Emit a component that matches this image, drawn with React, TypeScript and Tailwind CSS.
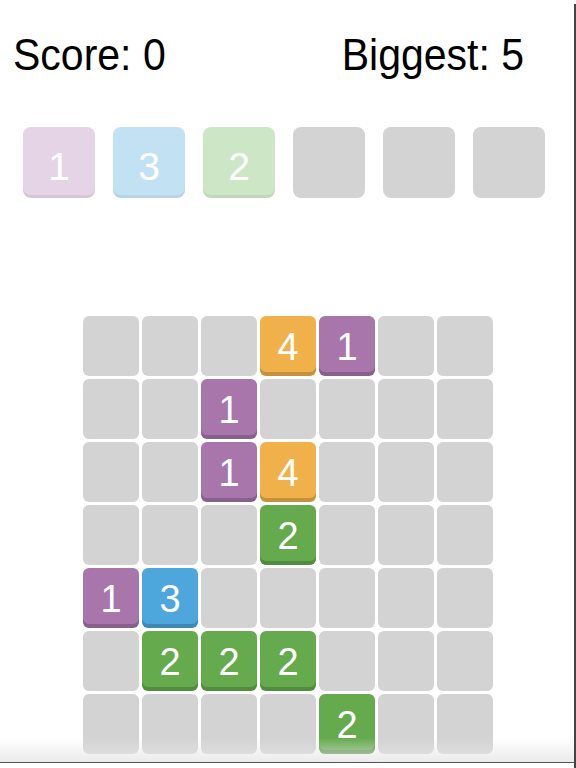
const board: number[][] = [
  [0, 0, 0, 4, 1, 0, 0],
  [0, 0, 1, 0, 0, 0, 0],
  [0, 0, 1, 4, 0, 0, 0],
  [0, 0, 0, 2, 0, 0, 0],
  [1, 3, 0, 0, 0, 0, 0],
  [0, 2, 2, 2, 0, 0, 0],
  [0, 0, 0, 0, 2, 0, 0],
];

const upcoming: number[] = [1, 3, 2, 0, 0, 0];

const tileColor: Record<number, string> = {
  0: "bg-[#d3d3d3]",
  1: "bg-[#a876aa] shadow-[inset_0_-4px_0_rgba(0,0,0,0.18)]",
  2: "bg-[#65ab4e] shadow-[inset_0_-4px_0_rgba(0,0,0,0.18)]",
  3: "bg-[#4ea7dc] shadow-[inset_0_-4px_0_rgba(0,0,0,0.18)]",
  4: "bg-[#f0b14a] shadow-[inset_0_-4px_0_rgba(0,0,0,0.18)]",
};

const pastel: Record<number, string> = {
  0: "bg-[#d3d3d3]",
  1: "bg-[#e4d4e6] shadow-[inset_0_-3px_0_rgba(0,0,0,0.06)]",
  2: "bg-[#cde6c5] shadow-[inset_0_-3px_0_rgba(0,0,0,0.06)]",
  3: "bg-[#c2e2f3] shadow-[inset_0_-3px_0_rgba(0,0,0,0.06)]",
};

function Tile({ value }: { value: number }) {
  return (
    <div
      className={`flex items-center justify-center rounded-[6px] pt-[2px] text-[38px] leading-none text-white ${tileColor[value]}`}
    >
      {value > 0 ? value : ""}
    </div>
  );
}

export default function App() {
  return (
    <div className="relative h-[768px] overflow-hidden bg-white font-['Liberation_Sans',Arial,sans-serif]">
      <header className="flex pt-[35px] pl-[13px] text-[41px] leading-none text-black">
        <span className="inline-block scale-y-[1.06]">Score: 0</span>
        <span className="ml-[176px] inline-block scale-y-[1.06]">Biggest: 5</span>
      </header>

      <div className="mt-[51px] flex gap-[18px] pl-[23px]">
        {upcoming.map((v, i) => (
          <div
            key={i}
            className={`flex h-[71px] w-[72px] items-center justify-center rounded-[8px] pt-[7px] text-[39px] leading-none text-white ${pastel[v]}`}
          >
            {v > 0 ? v : ""}
          </div>
        ))}
      </div>

      <div className="mt-[118px] grid grid-cols-[repeat(7,56px)] auto-rows-[60px] gap-[3px] pl-[83px]">
        {board.flat().map((v, i) => (
          <Tile key={i} value={v} />
        ))}
      </div>

      {/* window chrome at the bottom edge */}
      <div className="absolute inset-x-0 bottom-[6px] h-[24px] bg-gradient-to-b from-white/0 to-[#e6e6e6]/80" />
      <div className="absolute inset-x-0 bottom-[5px] h-[1px] bg-[#555]" />
      <div className="absolute top-[4px] bottom-0 right-0 w-[2px] bg-[#444]" />
    </div>
  );
}
